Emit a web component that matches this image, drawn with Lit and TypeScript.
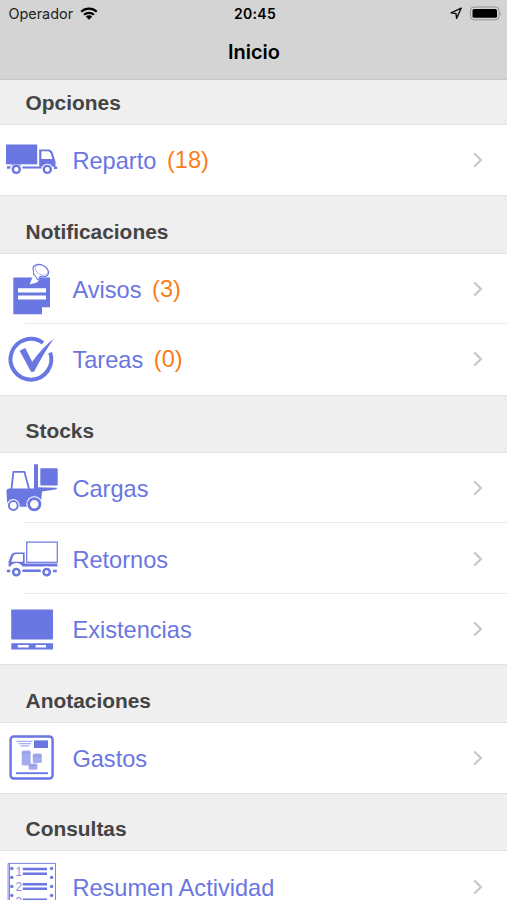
import { LitElement, html, css, svg, nothing, type SVGTemplateResult } from "lit";
import { customElement, property } from "lit/decorators.js";

const icons: Record<string, SVGTemplateResult> = {
  truck: svg`
    <rect x="6" y="19.5" width="31.2" height="19.8" fill="currentColor"/>
    <path fill="currentColor" fill-rule="evenodd" d="M39.2 24.4H48.8C51.8 24.4 53 28 54.2 32.4L55.5 36.5V41.8H52.6A6.2 6.2 0 0 0 42 41.8H39.2ZM41.4 26.2V34H52.4C51.3 30 50.6 26.2 47.9 26.2Z"/>
    <path fill="currentColor" d="M7 41.2H10.8L10 43.8H7ZM22.2 41.4H41.6V43.4H22.6ZM54 41.5H57.2V44H54Z"/>
    <path fill="currentColor" d="M10.5 41A6.5 6.5 0 0 1 22 41Z" opacity=".4"/>
    <circle cx="16.3" cy="44.4" r="3.5" fill="#fff" stroke="currentColor" stroke-width="2.4"/>
    <circle cx="47.3" cy="44.4" r="3.5" fill="#fff" stroke="currentColor" stroke-width="2.4"/>`,
  note: svg`
    <path fill="currentColor" d="M13.3 23.6H50V53.3H42V60.2H13.3Z"/>
    <path fill="#fff" d="M18 34.2H46V38.4H18ZM18 41.6H46V45.4H18Z"/>
    <path fill="#fff" d="M29.6 30.4L33.8 20L40 24.6L37 28.4Z"/>
    <path fill="#fff" stroke="currentColor" stroke-width="1.1" stroke-linejoin="round" d="M33.6 20.4Q34 17.5 33 15C32.5 11 37.5 9.6 41.6 10.8C46.8 12.4 49.6 17 48.2 20.2C47 22.8 43 23 40 22.4Q39.8 25 37.6 25.8Q36.6 22.4 33.6 20.4Z"/>
    <ellipse cx="41.6" cy="16" rx="6.8" ry="4.6" transform="rotate(28 41.6 16)" fill="none" stroke="currentColor" stroke-width=".7" opacity=".7"/>`,
  check: svg`
    <path fill="none" stroke="currentColor" stroke-width="4" d="M43 18.8A20.4 20.4 0 1 0 50.2 28.6"/>
    <path fill="currentColor" d="M19.6 26.8L25.2 24L32.2 37.8Q42 23.8 54 14.4Q44.5 27.5 34 47.8H31Z"/>`,
  forklift: svg`
    <path fill="none" stroke="currentColor" stroke-width="1.8" stroke-linejoin="round" d="M11.5 36L13.4 18.8H24.4L29 36"/>
    <path fill="currentColor" d="M34 11.2H38V34.2L56.8 34.8V36.2L42 38.5L41 50H7.2L6.4 38Q6.6 35.4 9 35.4H34ZM16 49H32V53.8H16Z"/>
    <rect x="40.3" y="15.2" width="17.4" height="17.2" rx="1" fill="currentColor"/>
    <circle cx="13.3" cy="52.5" r="6.5" fill="#fff"/><circle cx="34.3" cy="51.2" r="8" fill="#fff"/>
    <circle cx="13.3" cy="52.5" r="4.4" fill="#fff" stroke="currentColor" stroke-width="2"/>
    <circle cx="34.3" cy="51.2" r="5.6" fill="#fff" stroke="currentColor" stroke-width="2.8"/>`,
  emptyTruck: svg`
    <rect x="26.7" y="18.1" width="30.6" height="20.2" fill="none" stroke="currentColor" stroke-width="1.2"/>
    <path fill="currentColor" fill-rule="evenodd" d="M24.6 28.4V39.4H57.4V42.6H22.5A7 7 0 0 0 10.3 42.6H8.6V37.5L11 31.5Q12.2 28.4 15.5 28.4ZM23 30H16.2Q13.8 30 13 32.4L11.2 37.8H23Z"/>
    <path fill="currentColor" d="M6.8 45.8H10.4V48.2H6.8ZM22.4 45.6H40.8V48H22.4ZM53 45.8H56.8V48.2H53Z"/>
    <circle cx="16.3" cy="48" r="5.8" fill="#fff"/><circle cx="46.7" cy="48" r="5.8" fill="#fff"/>
    <circle cx="16.3" cy="48.1" r="3.2" fill="none" stroke="currentColor" stroke-width="2.5"/>
    <circle cx="46.7" cy="48.1" r="3.2" fill="none" stroke="currentColor" stroke-width="2.5"/>`,
  pallet: svg`
    <rect x="11.2" y="15.5" width="41.8" height="30" rx=".8" fill="currentColor"/>
    <path fill="currentColor" fill-rule="evenodd" d="M11.3 49.2H53V55.4H11.3ZM17.8 51V53.6H28.7V51ZM35.6 51V53.6H46V51Z"/>`,
  expenses: svg`
    <rect x="10.6" y="13.5" width="42" height="42" rx="3.2" fill="none" stroke="currentColor" stroke-width="2.4"/>
    <rect x="34" y="17.4" width="14" height="7.6" fill="currentColor"/>
    <path fill="none" stroke="currentColor" opacity=".6" stroke-width="1.2" d="M16.5 18.3H32.5M18.5 20.6H31M20.5 22.9H29.5"/>
    <g fill="currentColor" opacity=".6"><rect x="21.7" y="27.4" width="9" height="15.2" rx="1.6"/><rect x="32.8" y="30.6" width="9" height="9.4" rx="1.6"/><rect x="28.6" y="40.4" width="8.8" height="6.4" rx="1.5"/></g>
    <path fill="none" stroke="currentColor" opacity=".5" stroke-width=".8" d="M22 29.8H30.5M33 33H41.6M29 42.6H37"/>
    <path fill="none" stroke="currentColor" stroke-width="1.9" d="M16 50.2H48"/>`,
  list: svg`
    <path fill="none" stroke="currentColor" stroke-width=".9" d="M8.1 70V11.4H55.5V70M9.5 11.4V70"/>
    ${[16.4, 25.4, 34.4, 43.4].map((y) => svg`<circle cx="11.8" cy=${y} r="1.7" fill="currentColor"/><circle cx="51.6" cy=${y} r="1.7" fill="currentColor"/>`)}
    <path fill="none" stroke="currentColor" stroke-width="2.4" d="M22.8 17H47M22.8 21.7H47M22.8 32.2H47M22.8 36.8H47M22.8 47.6H47"/>
    <g class="num"><text x="15.6" y="23.8">1</text><text x="15.4" y="39">2</text><text x="15.4" y="54">3</text></g>`,
};

interface Item { icon: string; label: string; count?: number }
const sections: { title: string; items: Item[] }[] = [
  { title: "Opciones", items: [{ icon: "truck", label: "Reparto", count: 18 }] },
  { title: "Notificaciones", items: [{ icon: "note", label: "Avisos", count: 3 }, { icon: "check", label: "Tareas", count: 0 }] },
  { title: "Stocks", items: [{ icon: "forklift", label: "Cargas" }, { icon: "emptyTruck", label: "Retornos" }, { icon: "pallet", label: "Existencias" }] },
  { title: "Anotaciones", items: [{ icon: "expenses", label: "Gastos" }] },
  { title: "Consultas", items: [{ icon: "list", label: "Resumen Actividad" }] },
];

@customElement("menu-row")
export class MenuRow extends LitElement {
  @property({ attribute: false }) item!: Item;

  static styles = css`
    :host { display: flex; align-items: center; height: 70.45px; color: #6a76e2; background: #fff; }
    .icon { flex: none; width: 62px; height: 70px; margin-right: 10.4px; }
    .num { font: 12px "Liberation Sans", Arial, sans-serif; fill: currentColor; opacity: .8; }
    .label { font-size: 23.6px; line-height: 28px; padding-top: 2px; }
    .count { font-size: 23.6px; line-height: 28px; margin-left: 10.6px; color: #fb7d17; }
    .chevron { width: 12px; height: 18px; margin: 0 23.4px 0 auto; }
  `;

  render() {
    const { icon, label, count } = this.item;
    return html`
      <svg class="icon" viewBox="0 0 62 70">${icons[icon]}</svg>
      <span class="label">${label}</span>
      ${count === undefined ? nothing : html`<span class="count">(${count})</span>`}
      <svg class="chevron" viewBox="0 0 12 18"><path d="M2.2 2.5L9 9L2.2 15.5" fill="none" stroke="#c5c5c8" stroke-width="2"/></svg>
    `;
  }
}

@customElement("app-root")
export class AppRoot extends LitElement {
  static styles = css`
    :host { display: block; height: 900px; overflow: hidden; background: #fff; font-family: "Liberation Sans", Arial, sans-serif; }
    .top { height: 79.5px; background: #d4d4d4; border-bottom: 1px solid #c6c6c6; box-sizing: border-box; font-family: Inter, sans-serif; color: #000; }
    .status { display: grid; grid-template-columns: 1fr auto 1fr; align-items: center; height: 27px; padding: 0 5.5px 0 8.5px; font-size: 14px; }
    .left, .right { display: flex; align-items: center; }
    .right { justify-content: flex-end; gap: 6px; }
    .left { gap: 7px; color: #222; font-size: 14.4px; }
    .time { font-weight: 600; letter-spacing: .3px; }
    .title { margin: 0; text-align: center; font-size: 20px; line-height: 50px; font-weight: 600; text-indent: 1px; }
    .heading { display: flex; align-items: flex-end; box-sizing: border-box; height: 58.4px; margin: 0; padding: 0 0 8px 25.6px;
      border-top: 1px solid #e2e2e2; border-bottom: 1px solid #e2e2e2; background: #efefef; color: #444; font-size: 20.9px; line-height: 26px; font-weight: 700; }
    .first { height: 45.3px; border-top: none; }
    .line { height: 1px; margin: -1px 0 0 25px; background: #e9e9e9; position: relative; }
  `;

  render() {
    return html`
      <header class="top">
        <div class="status">
          <div class="left">
            <span>Operador</span>
            <svg width="18" height="13" viewBox="0 0 18 13"><g fill="none" stroke="#000" stroke-width="2.2"><path d="M1.2 4.8A11.2 11.2 0 0 1 16.8 4.8M4 7.8A7.2 7.2 0 0 1 14 7.8"/></g><path d="M5.8 9.6A4.6 4.6 0 0 1 12.2 9.6L9 12.8Z"/></svg>
          </div>
          <span class="time">20:45</span>
          <div class="right">
            <svg width="14" height="13" viewBox="0 0 14 13"><path d="M12.2 1.2L2 5.8L7 6.5L7.6 11.4Z" fill="none" stroke="#111" stroke-width="1.4" stroke-linejoin="round"/></svg>
            <svg width="33" height="15" viewBox="0 0 33 15"><rect x="1.5" y="1" width="28.5" height="12.8" rx="3.4" fill="none" stroke="#929292"/><rect x="3.5" y="3" width="24.5" height="8.8" rx="1.6"/><path d="M31.2 5.4Q32.8 7.4 31.2 9.4Z" fill="#929292"/></svg>
          </div>
        </div>
        <h1 class="title">Inicio</h1>
      </header>
      ${sections.map((s, i) => html`
        <section>
          <h2 class="heading ${i === 0 ? "first" : ""}">${s.title}</h2>
          ${s.items.map((item, j) => html`${j > 0 ? html`<div class="line"></div>` : nothing}<menu-row .item=${item}></menu-row>`)}
        </section>`)}
    `;
  }
}
